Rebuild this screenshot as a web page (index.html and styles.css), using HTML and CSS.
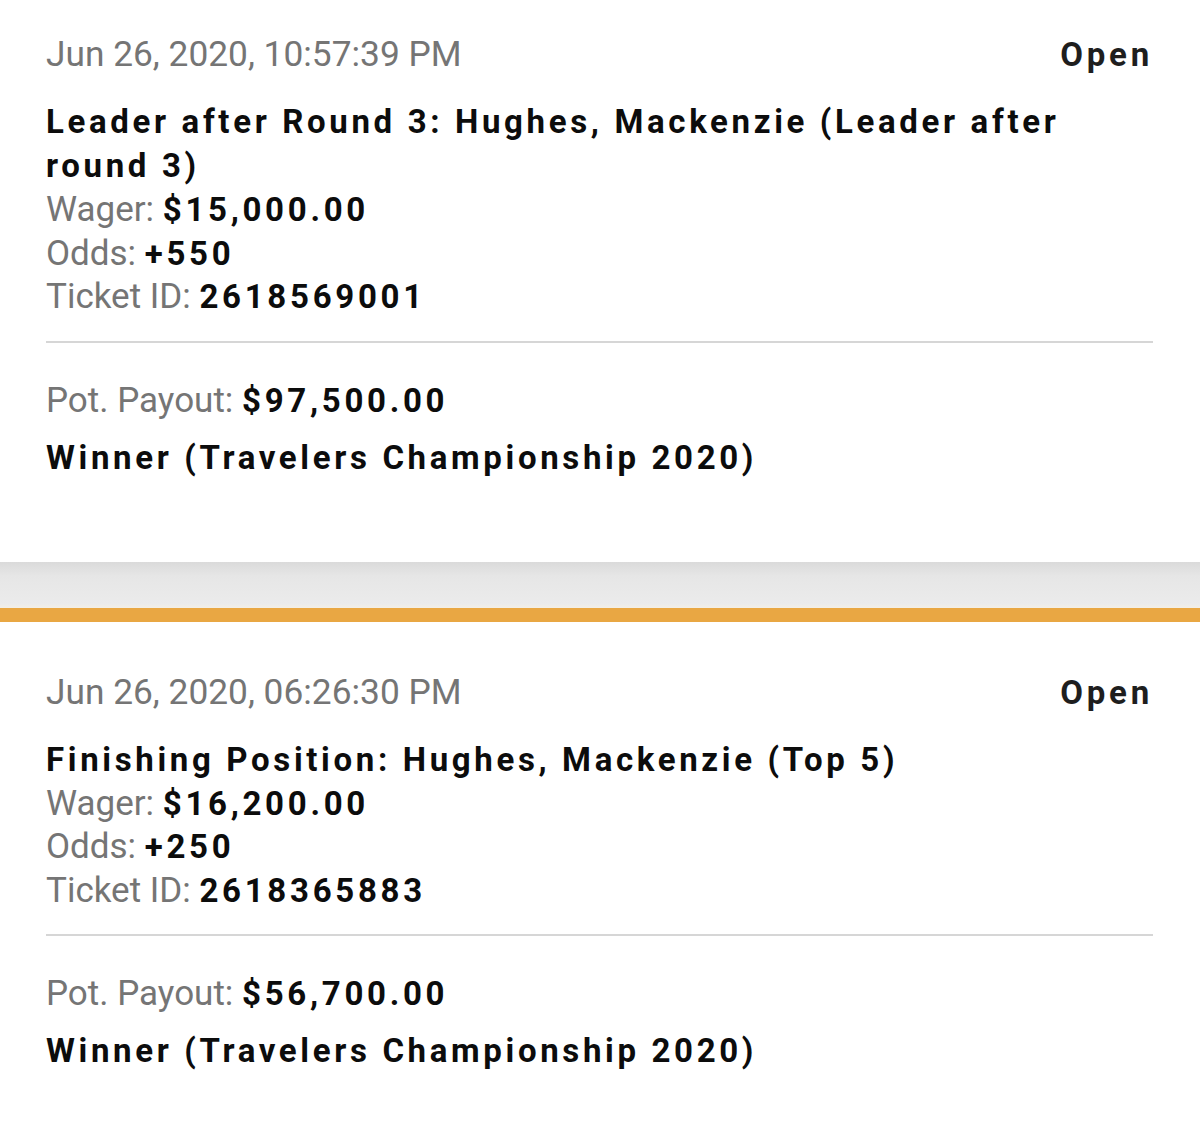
FILE: index.html
```html
<!DOCTYPE html>
<html lang="en">
<head>
<meta charset="UTF-8">
<meta name="viewport" content="width=device-width, initial-scale=1.0">
<title>Open Bets</title>
<link rel="stylesheet" href="styles.css">
</head>
<body>

<div class="tickets">
  <div class="ticket">
    <div class="ticket-head">
      <span class="ticket-date">Jun 26, 2020, 10:57:39 PM</span>
      <span class="ticket-status">Open</span>
    </div>
    <div class="ticket-title">Leader after Round 3: Hughes, Mackenzie (Leader after round 3)</div>
    <div class="ticket-row"><span class="label">Wager:</span> <span class="value">$15,000.00</span></div>
    <div class="ticket-row"><span class="label">Odds:</span> <span class="value">+550</span></div>
    <div class="ticket-row"><span class="label">Ticket ID:</span> <span class="value">2618569001</span></div>
    <hr class="ticket-line">
    <div class="ticket-row ticket-payout"><span class="label">Pot. Payout:</span> <span class="value">$97,500.00</span></div>
    <div class="ticket-event">Winner (Travelers Championship 2020)</div>
  </div>

  <div class="ticket-gap"></div>

  <div class="ticket">
    <div class="ticket-head">
      <span class="ticket-date">Jun 26, 2020, 06:26:30 PM</span>
      <span class="ticket-status">Open</span>
    </div>
    <div class="ticket-title">Finishing Position: Hughes, Mackenzie (Top 5)</div>
    <div class="ticket-row"><span class="label">Wager:</span> <span class="value">$16,200.00</span></div>
    <div class="ticket-row"><span class="label">Odds:</span> <span class="value">+250</span></div>
    <div class="ticket-row"><span class="label">Ticket ID:</span> <span class="value">2618365883</span></div>
    <hr class="ticket-line">
    <div class="ticket-row ticket-payout"><span class="label">Pot. Payout:</span> <span class="value">$56,700.00</span></div>
    <div class="ticket-event">Winner (Travelers Championship 2020)</div>
  </div>
</div>

</body>
</html>
```

FILE: styles.css
```css
body {
  font-family: Roboto, "Liberation Sans", sans-serif;
  margin: 0;
  padding: 0;
  background-color: #fff;
  color: #111;
  overflow: hidden;
}
.tickets {
  margin-top: -16px;
}
.ticket {
  background-color: #fff;
  padding: 48px 47px 82px 46px;
}
.ticket-head {
  display: flex;
  justify-content: space-between;
  align-items: baseline;
  line-height: 44px;
}
.ticket-date {
  font-size: 35.3px;
  color: #757575;
}
.ticket-status {
  font-size: 33px;
  font-weight: bold;
  letter-spacing: 3.8px;
  color: #1e1e1e;
}
.ticket-title,
.ticket-event {
  font-size: 33px;
  font-weight: bold;
  letter-spacing: 3.65px;
  line-height: 44px;
  color: #0c0c0c;
}
.ticket-title {
  margin-top: 23px;
}
.ticket-row {
  font-size: 35px;
  line-height: 43.5px;
  color: #757575;
}
.ticket-payout {
  margin-top: 36px;
  line-height: 44px;
}
.value {
  font-size: 33px;
  font-weight: bold;
  letter-spacing: 3.7px;
  line-height: 1;
  color: #0c0c0c;
}
.ticket-line {
  margin: 22px 0 0;
  border: none;
  height: 2px;
  background-color: #d6d6d6;
}
.ticket-event {
  margin-top: 13px;
}
/* grey band + orange rule between tickets */
.ticket-gap {
  height: 46px;
  background: linear-gradient(#dadada, #e6e6e6 30%, #ebebeb 90%, #f3efe6);
  border-bottom: 14px solid #e9a743;
}
```
